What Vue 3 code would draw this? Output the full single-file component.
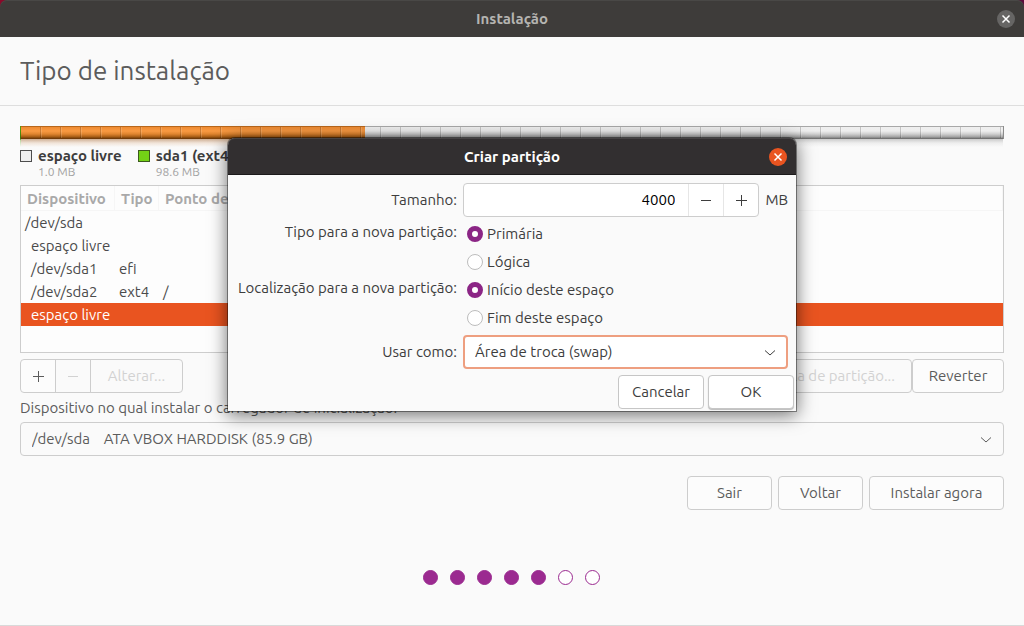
<script setup>
import { ref } from 'vue'

const segments = [
  { kind: 'boot', share: 0.1 },
  { kind: 'root', share: 34.96 },
  { kind: 'free', share: 64.94 }
]

const legend = [
  { name: 'espaço livre', size: '1.0 MB', kind: 'free' },
  { name: 'sda1 (ext4)', size: '98.6 MB', kind: 'boot' }
]

const rows = [
  { device: '/dev/sda', type: '', mount: '', child: false },
  { device: 'espaço livre', type: '', mount: '', child: true },
  { device: '/dev/sda1', type: 'efi', mount: '', child: true },
  { device: '/dev/sda2', type: 'ext4', mount: '/', child: true },
  { device: 'espaço livre', type: '', mount: '', child: true, selected: true }
]

const size = ref('4000')
const kind = ref('primary')
const place = ref('start')
const steps = 7
const done = 5
</script>

<template>
  <div class="desktop">
    <div class="window">
      <header class="titlebar">
        <span class="titlebar-text">Instalação</span>
        <button class="close" type="button" aria-label="Fechar">
          <svg viewBox="0 0 18 18" width="18" height="18"><path d="M5.5 5.5l7 7M12.5 5.5l-7 7" /></svg>
        </button>
      </header>

      <h1 class="heading">Tipo de instalação</h1>

      <main class="content">
        <div class="disk">
          <span v-for="s in segments" :key="s.kind" class="segment" :class="s.kind" :style="{ width: s.share + '%' }"></span>
        </div>

        <ul class="legend">
          <li v-for="l in legend" :key="l.name">
            <span class="swatch" :class="l.kind"></span>
            <span class="legend-name">{{ l.name }}</span>
            <span class="legend-size">{{ l.size }}</span>
          </li>
        </ul>

        <div class="tree">
          <table>
            <colgroup><col class="c-device" /><col class="c-type" /><col /></colgroup>
            <thead>
              <tr><th>Dispositivo</th><th>Tipo</th><th>Ponto de montagem</th></tr>
            </thead>
            <tbody>
              <tr v-for="(r, i) in rows" :key="i" :class="{ selected: r.selected }">
                <td :class="{ child: r.child }">{{ r.device }}</td>
                <td>{{ r.type }}</td>
                <td>{{ r.mount }}</td>
              </tr>
            </tbody>
          </table>
        </div>

        <div class="toolbar">
          <div class="linked">
            <button class="btn icon" type="button" aria-label="Adicionar">
              <svg viewBox="0 0 11 11" width="11" height="11"><path d="M0 5.5h11M5.5 0v11" /></svg>
            </button>
            <button class="btn icon" type="button" aria-label="Remover" disabled>
              <svg viewBox="0 0 12 12" width="12" height="12"><path d="M1 6.5h10" /></svg>
            </button>
            <button class="btn change" type="button" disabled>Alterar...</button>
          </div>
          <div class="right">
            <button class="btn" type="button" disabled>Nova tabela de partição...</button>
            <button class="btn revert" type="button">Reverter</button>
          </div>
        </div>

        <label class="boot-label" for="bootdev">Dispositivo no qual instalar o carregador de inicialização:</label>
        <div class="combo">
          <select id="bootdev">
            <option>/dev/sda&nbsp;&nbsp;&nbsp; ATA VBOX HARDDISK (85.9 GB)</option>
          </select>
          <svg class="chevron" viewBox="0 0 12 8" width="12" height="8"><path d="M1 1.5l5 4.500l5-4.500" /></svg>
        </div>

        <div class="nav">
          <button class="btn short" type="button">Sair</button>
          <button class="btn short" type="button">Voltar</button>
          <button class="btn install" type="button">Instalar agora</button>
        </div>

        <div class="dots">
          <span v-for="n in steps" :key="n" class="dot" :class="{ full: n <= done }"></span>
        </div>
      </main>
    </div>

    <form class="dialog" role="dialog" aria-labelledby="dlg-title" @submit.prevent>
      <header class="titlebar dark">
        <span id="dlg-title" class="titlebar-text">Criar partição</span>
        <button class="close orange" type="button" aria-label="Fechar">
          <svg viewBox="0 0 18 18" width="18" height="18"><path d="M5.5 5.5l7 7M12.5 5.5l-7 7" /></svg>
        </button>
      </header>

      <div class="fields">
        <label class="name middle" for="size">Tamanho:</label>
        <div class="size">
          <div class="spin">
            <input id="size" v-model="size" type="text" inputmode="numeric" />
            <button type="button" aria-label="Diminuir">
              <svg viewBox="0 0 12 12" width="12" height="12"><path d="M1 6.5h10" /></svg>
            </button>
            <button type="button" aria-label="Aumentar">
              <svg viewBox="0 0 11 11" width="11" height="11"><path d="M0 5.5h11M5.5 0v11" /></svg>
            </button>
          </div>
          <span>MB</span>
        </div>

        <span id="kind-name" class="name group">Tipo para a nova partição:</span>
        <div class="radios group" role="radiogroup" aria-labelledby="kind-name">
          <label><input v-model="kind" type="radio" name="kind" value="primary" />Primária</label>
          <label><input v-model="kind" type="radio" name="kind" value="logical" />Lógica</label>
        </div>

        <span id="place-name" class="name">Localização para a nova partição:</span>
        <div class="radios" role="radiogroup" aria-labelledby="place-name">
          <label><input v-model="place" type="radio" name="place" value="start" />Início deste espaço</label>
          <label><input v-model="place" type="radio" name="place" value="end" />Fim deste espaço</label>
        </div>

        <label class="name middle use" for="use">Usar como:</label>
        <div class="combo focus use">
          <select id="use">
            <option>Área de troca (swap)</option>
          </select>
          <svg class="chevron" viewBox="0 0 12 8" width="12" height="8"><path d="M1 1.5l5 4.500l5-4.500" /></svg>
        </div>
      </div>

      <div class="actions">
        <button class="btn" type="button">Cancelar</button>
        <button class="btn default" type="submit">OK</button>
      </div>
    </form>
  </div>
</template>

<style>
body {
  background: #fafafa;
}
</style>

<style scoped>
* {
  box-sizing: border-box;
}

.desktop {
  position: relative;
  background: linear-gradient(90deg, #8a0a2a, #5c0a3c) top / 100% 37px no-repeat;
  font-family: Ubuntu, "Noto Sans", "Open Sans", sans-serif;
  font-size: 15px;
  line-height: 20px;
  color: #5c5c5c;
}

button,
input,
select {
  font: inherit;
  color: inherit;
  margin: 0;
}

svg {
  display: block;
  fill: none;
  stroke: currentColor;
}

.window {
  border-bottom: 1px solid #d9d9d9;
}

.titlebar {
  display: grid;
  grid-template-columns: 1fr auto 1fr;
  align-items: center;
  height: 37px;
  padding: 0 9px;
  border-radius: 7px 7px 0 0;
  background: #3e3c3a;
  box-shadow: inset 0 1px #494846;
  color: #b5b4b1;
}

.titlebar-text {
  grid-column: 2;
  font-weight: 700;
}

.close {
  justify-self: end;
  width: 18px;
  height: 18px;
  padding: 0;
  border: 0;
  border-radius: 50%;
  background: #666564;
  color: #fff;
}

.close svg {
  stroke-width: 1.5;
}

.close.orange {
  background: #e95420;
}

.heading {
  margin: 0;
  padding: 18px 20px;
  border-bottom: 1px solid #dedede;
  background: #fafafa;
  font-size: 26px;
  line-height: 32px;
  font-weight: 400;
}

.content {
  padding: 20px 20px 40px;
  background: #fafafa;
}

.disk {
  position: relative;
  display: flex;
  height: 13px;
  border-right: 1px solid #8c8c8c;
}

.segment {
  height: 21px;
}

.segment.boot {
  background: linear-gradient(#57a40f, #3f770b 13px, #b7d39b 14px, #fafafa);
}

.segment.root {
  background: linear-gradient(#b8671b 0 1px, #ee8a31 1px, #f99a42 5px, #e0852f 8px, #a45b14 11px, #7a4009 12px, #68350a 13px, #cfb095 13px, #f1e4d9 17px, #fafafa);
}

.segment.free {
  background: linear-gradient(#a8a8a8 0 1px, #efefef 1px, #eeeeee 5px, #d0d0d0 8px, #a2a2a2 11px, #7d7d7d 12px, #686868 13px, #cbcbcb 13px, #eeeeee 17px, #fafafa);
}

.disk::after {
  content: "";
  position: absolute;
  inset: 1px 0 1px 20px;
  background: repeating-linear-gradient(90deg, rgba(0, 0, 0, 0.18) 0 1px, rgba(255, 255, 255, 0.15) 1px 2px, transparent 2px 20px);
}

.legend {
  position: relative;
  display: flex;
  gap: 16px;
  margin: 7px 0 0;
  padding: 0;
  list-style: none;
}

.legend li {
  display: grid;
  grid-template-columns: 12px auto;
  column-gap: 6px;
  align-items: center;
}

.swatch {
  width: 12px;
  height: 12px;
  border: 1px solid #4d4d4d;
  background: #eeeeee;
}

.swatch.boot {
  border-color: #3c5a1e;
  background: #73d216;
}

.legend-name {
  font-weight: 700;
  color: #3d3d3d;
}

.legend-size {
  grid-column: 2;
  font-size: 12px;
  line-height: 12px;
  color: #a3a3a3;
}

.tree {
  margin-top: 7px;
  padding-bottom: 26px;
  border: 1px solid #cdcdcd;
  background: #fdfdfd;
  color: #4b4b4b;
}

table {
  width: 100%;
  border-collapse: collapse;
  table-layout: fixed;
}

.c-device {
  width: 94px;
}

.c-type {
  width: 44px;
}

th,
td {
  padding: 0 4px;
  text-align: left;
  white-space: nowrap;
}

th {
  height: 25px;
  padding: 0 6px;
  color: #a9a9a9;
  box-shadow: inset -1px -1px #f6f6f6;
}

td {
  height: 23px;
}

td.child {
  padding-left: 10px;
}

tr.selected {
  background: #e95420;
  color: #fff;
}

.toolbar {
  display: flex;
  justify-content: space-between;
  margin-top: 6px;
}

.linked,
.right {
  display: flex;
}

.btn {
  display: flex;
  align-items: center;
  justify-content: center;
  height: 34px;
  padding: 0 16px;
  border: 1px solid #cdcdcd;
  border-radius: 4px;
  background: #fcfcfc;
  white-space: nowrap;
}

.btn:disabled {
  background: #fafafa;
  color: #d2d2d2;
}

.btn.icon {
  width: 36px;
  padding: 0;
}

.linked .btn + .btn {
  margin-left: -1px;
}

.linked .btn:first-child {
  border-radius: 4px 0 0 4px;
}

.linked .btn:nth-child(2) {
  border-radius: 0;
}

.linked .btn:last-child {
  border-radius: 0 4px 4px 0;
}

.btn.change {
  width: 93px;
}

.btn.revert {
  width: 92px;
}

.boot-label {
  display: block;
  margin: 5px 0 4px;
}

.combo {
  position: relative;
}

.combo select {
  display: block;
  width: 100%;
  height: 34px;
  padding: 0 32px 0 11px;
  border: 1px solid #cdcdcd;
  border-radius: 4px;
  background: #fafafa;
  appearance: none;
}

.combo .chevron {
  position: absolute;
  top: 14px;
  right: 12px;
  pointer-events: none;
}

.nav {
  display: flex;
  justify-content: flex-end;
  gap: 6px;
  margin-top: 20px;
}

.btn.short {
  width: 85px;
}

.btn.install {
  width: 135px;
}

.dots {
  display: flex;
  justify-content: center;
  gap: 12px;
  margin-top: 60px;
  padding-right: 1px;
}

.dot {
  width: 15px;
  height: 15px;
  border: 1px solid #9b2a90;
  border-radius: 50%;
  background: #fff;
}

.dot.full {
  background: #9b2a90;
}

.dialog {
  position: absolute;
  top: 138px;
  left: 50%;
  width: 568px;
  transform: translateX(-50%);
  border-radius: 7px 7px 0 0;
  background: #fafafa;
  box-shadow: 0 0 0 1px rgba(0, 0, 0, 0.4), 0 3px 18px 1px rgba(0, 0, 0, 0.55);
  color: #3d3d3d;
}

.titlebar.dark {
  background: #322f30;
  box-shadow: inset 0 1px #454243, inset 0 -1px #1c1a1b;
  color: #fff;
}

.fields {
  display: grid;
  grid-template-columns: 1fr 325px;
  column-gap: 6px;
  padding: 8px 8px 0;
}

.name {
  text-align: right;
  white-space: nowrap;
  padding-top: 2px;
}

.name.middle {
  align-self: center;
  padding-top: 0;
}

.group {
  margin-top: 3px;
}

.size {
  display: flex;
  align-items: center;
  gap: 6px;
}

.spin {
  display: flex;
  flex: 1;
  height: 34px;
  border: 1px solid #cdcdcd;
  border-radius: 4px;
  background: #fff;
  overflow: hidden;
}

.spin input {
  flex: 1;
  min-width: 0;
  padding: 0 13px;
  border: 0;
  outline: 0;
  background: none;
  color: #000;
  text-align: right;
}

.spin button {
  display: flex;
  align-items: center;
  justify-content: center;
  width: 35px;
  padding: 0;
  border: 0;
  border-left: 1px solid #e6e6e6;
  background: none;
}

.radios label {
  display: flex;
  align-items: center;
  gap: 4px;
  height: 28px;
  padding-left: 4px;
}

.radios input {
  width: 16px;
  height: 16px;
  border: 1px solid #bdbdbd;
  border-radius: 50%;
  background: #fff;
  appearance: none;
}

.radios input:checked {
  border: 5px solid #8b2585;
}

.use {
  margin-top: 3px;
}

.combo.focus select {
  border: 2px solid #ee9f80;
  background: #fff;
  padding-left: 10px;
}

.actions {
  display: flex;
  justify-content: flex-end;
  gap: 4px;
  padding: 6px 2px 2px;
}

.actions .btn {
  width: 86px;
  background: #fff;
  border-color: #c6c6c6;
}

.actions .btn.default {
  box-shadow: 0 1px 1px rgba(0, 0, 0, 0.25);
}
</style>
